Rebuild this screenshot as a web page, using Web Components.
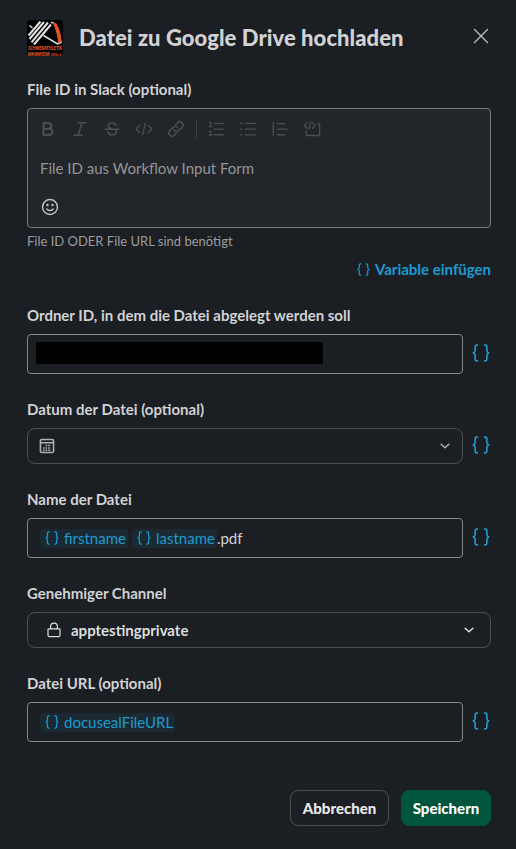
<!DOCTYPE html>
<html lang="de">
<head>
<meta charset="utf-8">
<title>Datei zu Google Drive hochladen</title>
<style>
html,body{margin:0;background:#1b1e23}
body{font-family:Lato,sans-serif;font-size:15px;line-height:22px;color:#d1d2d3}
</style>
</head>
<body>
<workflow-dialog>
  <club-logo slot="logo"></club-logo>
  <span slot="title">Datei zu Google Drive hochladen</span>
  <form-field label="File ID in Slack (optional)" hint="File ID ODER File URL sind benötigt" link="Variable einfügen">
    <rich-editor placeholder="File ID aus Workflow Input Form"></rich-editor>
  </form-field>
  <form-field label="Ordner ID, in dem die Datei abgelegt werden soll" insert>
    <text-box><redacted-bar></redacted-bar></text-box>
  </form-field>
  <form-field label="Datum der Datei (optional)" insert>
    <select-box icon="calendar"></select-box>
  </form-field>
  <form-field label="Name der Datei" insert>
    <text-box><variable-chip>firstname</variable-chip><variable-chip style="margin-left:4px">lastname</variable-chip><span>.pdf</span></text-box>
  </form-field>
  <form-field label="Genehmiger Channel">
    <select-box icon="lock" filled>apptestingprivate</select-box>
  </form-field>
  <form-field label="Datei URL (optional)" insert>
    <text-box><variable-chip>docusealFileURL</variable-chip></text-box>
  </form-field>
  <action-button slot="actions">Abbrechen</action-button>
  <action-button slot="actions" primary>Speichern</action-button>
</workflow-dialog>
<script>
const S = 'fill="none" stroke="currentColor" stroke-linecap="round" stroke-linejoin="round"';
const ICONS = {
  close: `<path ${S} stroke-width="1.4" d="m3.5 3.5 13 13m0-13-13 13"/>`,
  braces: `<path ${S} stroke-width="1.8" d="M6 1.300H5.300Q3.500 1.300 3.500 3.100V7.200Q3.500 9 1.400 10 3.500 11 3.500 12.800v4.100Q3.500 18.700 5.300 18.700H6M14 1.300h.7q1.800 0 1.800 1.800v4.100q0 1.800 2.100 2.800-2.100 1-2.100 2.800v4.100q0 1.800-1.800 1.800H14"/>`,
  bold: `<path ${S} stroke-width="2.5" d="M5 3.600h5.500a3.100 3.100 0 0 1 0 6.200H5zm0 6.200h6.600a3.300 3.300 0 0 1 0 6.600H5z"/>`,
  italic: `<path ${S} stroke-width="1.7" d="M8 3h8.500M3.500 17H12M12.300 3 7.800 17"/>`,
  strike: `<path ${S} stroke-width="1.7" d="M14.6 6c-.5-1.7-2.1-2.7-4.4-2.7-2.5 0-4.4 1.2-4.4 3.1 0 1.6 1.2 2.6 3.5 3.4M2.5 10.2h15M5.6 13.4c.5 2 2.2 3.1 4.600 3.100 2.700 0 4.500-1.200 4.500-3.200 0-1.300-.7-2.200-1.700-2.800"/>`,
  code: `<path ${S} stroke-width="1.6" d="M5.2 6 1.3 10l3.9 4M14.8 6l3.9 4-3.9 4M11.5 3.500l-3 13"/>`,
  link: `<path ${S} stroke-width="1.7" d="m9.500 5.600 2.400-2.500a3.400 3.400 0 0 1 5 4.900l-3.600 3.700a3.400 3.400 0 0 1-5.400-.8M10.500 14.400l-2.400 2.500a3.400 3.400 0 0 1-5-4.900l3.600-3.700a3.400 3.400 0 0 1 5.400.8"/>`,
  ordered: `<path ${S} stroke-width="1.5" d="M8 4h10M8 10.2h10M8 16.400h10"/><path ${S} stroke-width="1.2" d="M2.600 3 4 2.300V7M2.300 7h3.200M2.400 13.400c.2-1.200 2.800-1.300 2.800.2 0 1-1.400 1.900-2.800 3.200h3.100"/>`,
  bullets: `<path ${S} stroke-width="1.5" d="M7 3.800h11M7 10.200h11M7 16.600h11"/><path ${S} stroke-width="2" d="M2.400 3.800h.1m-.1 6.400h.1m-.1 6.400h.1"/>`,
  quote: `<path ${S} stroke-width="1.5" d="M2.500 3v14M7 4h8M7 10.200h11M7 16.400h8"/>`,
  block: `<path ${S} stroke-width="1.5" d="M4.300 3.200 1.400 6.200l2.900 3M8.600 2.200 6.400 10M10.500 3.200l2.900 3-2.900 3M16 4.200h1q1.500 0 1.500 1.500v10q0 1.500-1.500 1.500H5q-1.500 0-1.500-1.500v-3.200"/>`,
  smile: `<circle ${S} stroke-width="1.600" cx="10" cy="10" r="8.300"/><path ${S} stroke-width="1.600" d="M6.400 12.200q3.600 3.600 7.200 0"/><circle cx="7.200" cy="7.800" r="1.300" fill="currentColor"/><circle cx="12.800" cy="7.800" r="1.300" fill="currentColor"/>`,
  calendar: `<path ${S} stroke-width="2" d="M3.500 1.800h13q1.700 0 1.700 1.700v13q0 1.700-1.700 1.700h-13q-1.700 0-1.700-1.700v-13q0-1.700 1.700-1.700zM2 6h16"/><path fill="none" stroke="currentColor" stroke-width="1.900" stroke-dasharray="2 1.200" d="M8.200 9.400h6.800M5 12.400h10M5 15.400h10"/>`,
  lock: `<path ${S} stroke-width="1.500" d="M3.500 8.700h13q1 0 1 1v7q0 1.500-1.500 1.500H4q-1.500 0-1.500-1.500v-7q0-1 1-1zM5.800 8.700V5.500q0-4 4.200-4t4.200 4v3.200"/>`,
  chevron: `<path ${S} stroke-width="2.500" d="m3.500 7 6.500 6 6.500-6"/>`
};
const icon = (name, size, style = '') =>
  `<svg viewBox="0 0 20 20" width="${size}" height="${size}" style="${style}" aria-hidden="true">${ICONS[name]}</svg>`;

function define(tag, render) {
  customElements.define(tag, class extends HTMLElement {
    connectedCallback() {
      if (this.shadowRoot) return;
      this.attachShadow({ mode: 'open' }).innerHTML = '<style>*{box-sizing:border-box}svg{display:block;flex:none}</style>' + render(this);
    }
  });
}

define('club-logo', () => `
  <style>:host{display:block;width:36px;height:36px;border-radius:4px;background:#000}svg{overflow:visible}</style>
  <svg viewBox="0 0 36 36" width="36" height="36">
    <g fill="none" stroke="#e2e3e4">
      <path stroke-width="2" d="M1.500 15.500 13.500 1.500M2.500 19 17 2M4.500 22.300 21 2.500M7 24.500 24 4.500"/>
      <path stroke-width="1.500" d="m2.500 5.500 3 2.500M24 2.500l3 .2M16.500 15.500 30.500 24l3.500-1.500-2-9"/>
    </g>
    <path fill="#dd5527" d="m25.500 2 4 1.500q4.800 8.500 5 18l-3.200 2q-1-11-5.800-21.500z"/>
    <g fill="#ea5a28" font-family="Roboto,sans-serif" font-weight="700">
      <text x="1" y="30.300" font-size="4.600" textLength="34" lengthAdjust="spacingAndGlyphs">SCHWERATHLETIK</text>
      <text x="1" y="35.700" font-size="4.600" textLength="21.500" lengthAdjust="spacingAndGlyphs">MANNHEIM</text>
      <text x="24" y="35.700" font-size="3.200" textLength="10.500" lengthAdjust="spacingAndGlyphs">2018 e.V.</text>
    </g>
  </svg>`);

define('workflow-dialog', () => `
  <style>
    :host{display:flex;flex-direction:column;width:516px;height:849px;box-sizing:border-box;padding:20px 25px 23px 27px;background:#1b1e23}
    header{display:flex;align-items:center;height:36px;margin-bottom:22px}
    h1{flex:1;margin:0 0 0 16px;font-size:22px;line-height:30px;font-weight:900;letter-spacing:.06px;white-space:nowrap}
    header svg{color:#bcbdbe;margin:-4px 0 0}
    main{display:flex;flex-direction:column;gap:24px;flex:1}
    footer{display:flex;justify-content:flex-end;gap:12px}
  </style>
  <header><slot name="logo"></slot><h1><slot name="title"></slot></h1>${icon('close', 20)}</header>
  <main><slot></slot></main>
  <footer><slot name="actions"></slot></footer>`);

define('form-field', el => `
  <style>
    :host{display:block}
    label{display:block;font-weight:700;height:22px;margin-bottom:8px;white-space:nowrap}
    .row{display:flex;align-items:center}
    ::slotted(*){flex:1}
    .insert{width:28px;display:flex;justify-content:flex-end;color:#1d9bd1;margin-top:-2px;padding-right:1px}
    .hint{font-size:13px;line-height:18px;margin-top:4px;color:#9b9c9e}
    .link{display:flex;justify-content:flex-end;align-items:center;gap:5px;height:22px;margin-top:8px;color:#1d9bd1;font-weight:700}
  </style>
  <label>${el.getAttribute('label')}</label>
  <div class="row"><slot></slot>${el.hasAttribute('insert') ? `<div class="insert">${icon('braces', 18)}</div>` : ''}</div>
  ${el.hasAttribute('hint') ? `<div class="hint">${el.getAttribute('hint')}</div>` : ''}
  ${el.hasAttribute('link') ? `<div class="link">${icon('braces', 13)}<span>${el.getAttribute('link')}</span></div>` : ''}`);

define('rich-editor', el => `
  <style>
    :host{display:flex;flex-direction:column;box-sizing:border-box;height:120px;border:1px solid #797b7d;border-radius:4px;background:#222529;padding:10px 11px}
    .bar{display:flex;align-items:center;gap:14px;height:20px;color:#4b4e51}
    i{width:1px;height:20px;background:#3d4043;margin:0 -4px 0 -3px}
    p{margin:18px 0 0 1px;height:22px;color:#949597}
    .emoji{margin:19px 0 0 1px;color:#c0c1c2}
  </style>
  <div class="bar">${['bold','italic','strike','code','link'].map(n => icon(n, 18)).join('')}<i></i>${['ordered','bullets','quote','block'].map(n => icon(n, 18)).join('')}</div>
  <p>${el.getAttribute('placeholder')}</p>
  <div class="emoji">${icon('smile', 18, 'margin-left:1px')}</div>`);

define('text-box', () => `
  <style>:host{display:flex;align-items:center;box-sizing:border-box;height:40px;border:1px solid #868789;border-radius:4px;padding:0 12px}</style>
  <slot></slot>`);

define('redacted-bar', () => `
  <style>:host{display:block;width:287px;height:22px;background:#000;margin:-2px 0 0 -4px}</style>`);

define('select-box', el => `
  <style>
    :host{display:flex;align-items:center;box-sizing:border-box;height:36px;border:1px solid #4b4e51;border-radius:8px;padding:0 11px;font-weight:700;color:#b0b1b2}
    :host([filled]){padding:0 15px 0 18px;color:#dcdddd}
    span{flex:1;margin-left:9px}
  </style>
  ${icon(el.getAttribute('icon'), 16)}<span><slot></slot></span>${icon('chevron', 12)}`);

define('variable-chip', () => `
  <style>:host{display:flex;align-items:center;gap:5px;height:19px;padding:0 2px 0 5px;border-radius:3px;background:#1b2a32;color:#1d9bd1}svg{margin-top:-1px}</style>
  ${icon('braces', 14)}<span><slot></slot></span>`);

define('action-button', () => `
  <style>
    :host{display:flex;align-items:center;justify-content:center;box-sizing:border-box;width:99px;height:36px;border:1px solid #4b4e51;border-radius:8px;font-weight:900;color:#eaeaeb}
    :host([primary]){width:90px;border-color:#00553d;background:#00553d;color:#fff}
  </style>
  <slot></slot>`);
</script>
</body>
</html>
